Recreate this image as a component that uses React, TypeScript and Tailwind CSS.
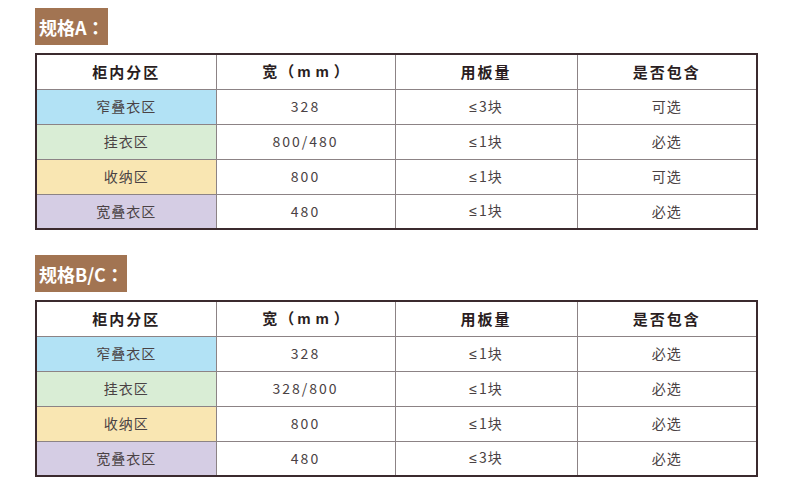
import React from "react";

type Row = { zone: string; bg: string; width: string; boards: string; incl: string };

const tableA: Row[] = [
  { zone: "窄叠衣区", bg: "bg-[#b2e2f5]", width: "328", boards: "3块", incl: "可选" },
  { zone: "挂衣区", bg: "bg-[#d9edd5]", width: "800/480", boards: "1块", incl: "必选" },
  { zone: "收纳区", bg: "bg-[#f9e6b2]", width: "800", boards: "1块", incl: "可选" },
  { zone: "宽叠衣区", bg: "bg-[#d5cde4]", width: "480", boards: "1块", incl: "必选" },
];

const tableB: Row[] = [
  { zone: "窄叠衣区", bg: "bg-[#b2e2f5]", width: "328", boards: "1块", incl: "必选" },
  { zone: "挂衣区", bg: "bg-[#d9edd5]", width: "328/800", boards: "1块", incl: "必选" },
  { zone: "收纳区", bg: "bg-[#f9e6b2]", width: "800", boards: "1块", incl: "必选" },
  { zone: "宽叠衣区", bg: "bg-[#d5cde4]", width: "480", boards: "3块", incl: "必选" },
];

const font = "font-['Noto_Sans_CJK_SC','Noto_Sans',sans-serif]";

function Spec({ name, rows, mtop }: { name: string; rows: Row[]; mtop: string }) {
  return (
    <div className={mtop}>
      <div className="flex">
        <div className="h-[37px] pl-[4px] pr-[3px] bg-[#a27452] text-white text-[18px] font-bold flex items-center leading-none">
          <span>规格{name}</span>
          <span className="font-['Noto_Sans_CJK_TC',sans-serif]">：</span>
        </div>
      </div>
      <table className="mt-[8px] w-[721px] border-collapse border-2 border-[#3b2a2e] table-fixed">
        <colgroup>
          <col className="w-[180px]" />
          <col className="w-[179px]" />
          <col className="w-[182px]" />
          <col className="w-[180px]" />
        </colgroup>
        <thead>
          <tr className="h-[35px] text-[15px] font-bold text-[#2a1e22]">
            <th className="border border-[#8c8385] tracking-[2px] font-bold">柜内分区</th>
            <th className="border border-[#8c8385] font-bold">
              <span className="tracking-[2px]">宽</span>
              <span className="font-['Noto_Sans_CJK_TC',sans-serif]">（</span>
              <span className="tracking-[5px] pl-[3px] font-['Liberation_Sans',sans-serif]">mm</span>
              <span className="font-['Noto_Sans_CJK_TC',sans-serif]">）</span>
            </th>
            <th className="border border-[#8c8385] tracking-[2px] font-bold">用板量</th>
            <th className="border border-[#8c8385] tracking-[2px] font-bold">是否包含</th>
          </tr>
        </thead>
        <tbody>
          {rows.map((r, i) => (
            <tr key={i} className="h-[35px] text-[14px] text-[#4a4244]">
              <td className={`border border-[#8c8385] text-center tracking-[1px] ${r.bg}`}>{r.zone}</td>
              <td className="border border-[#8c8385] text-center tracking-[2px]">{r.width}</td>
              <td className="border border-[#8c8385] text-center tracking-[1px]">
                <span className="font-['DejaVu_Sans',sans-serif] text-[14px] font-light mr-[1px]">≤</span>
                {r.boards}
              </td>
              <td className="border border-[#8c8385] text-center tracking-[1px]">{r.incl}</td>
            </tr>
          ))}
        </tbody>
      </table>
    </div>
  );
}

export default function App() {
  return (
    <div className={`w-[790px] h-[488px] bg-white pl-[35px] pt-[8px] ${font}`}>
      <Spec name="A" rows={tableA} mtop="" />
      <Spec name="B/C" rows={tableB} mtop="mt-[25px]" />
    </div>
  );
}
